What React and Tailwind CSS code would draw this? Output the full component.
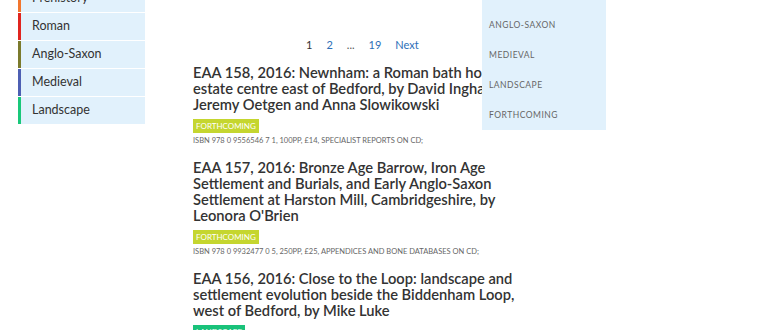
import React from "react";

const periods = [
  { name: "Prehistory", color: "border-[#f2762e]" },
  { name: "Roman", color: "border-[#e0251f]" },
  { name: "Anglo-Saxon", color: "border-[#7b7a2c]" },
  { name: "Medieval", color: "border-[#4d5fb3]" },
  { name: "Landscape", color: "border-[#19c87a]" },
];

const menu = ["Anglo-Saxon", "Medieval", "Landscape", "Forthcoming"];

const books = [
  {
    title:
      "EAA 158, 2016: Newnham: a Roman bath house and estate centre east of Bedford, by David Ingham, Jeremy Oetgen and Anna Slowikowski",
    tag: "Forthcoming",
    tagColor: "bg-[#c5d62f]",
    info: "ISBN 978 0 9556546 7 1, 100pp, £14, specialist reports on CD;",
  },
  {
    title:
      "EAA 157, 2016: Bronze Age Barrow, Iron Age Settlement and Burials, and Early Anglo-Saxon Settlement at Harston Mill, Cambridgeshire, by Leonora O'Brien",
    tag: "Forthcoming",
    tagColor: "bg-[#c5d62f]",
    info: "ISBN 978 0 9932477 0 5, 250pp, £25, appendices and bone databases on CD;",
  },
  {
    title:
      "EAA 156, 2016: Close to the Loop: landscape and settlement evolution beside the Biddenham Loop, west of Bedford, by Mike Luke",
    tag: "Landscape",
    tagColor: "bg-[#19c27a]",
    info: "ISBN 978 0 9556546 6 4, 200pp, £20;",
  },
];

export default function App() {
  return (
    <div className="relative w-[770px] h-[330px] overflow-hidden bg-white font-['Lato',sans-serif] text-[#333]">
      <div className="flex items-start">
        {/* Sidebar */}
        <div className="ml-[18px] w-[127px] -mt-[15px] flex flex-col gap-[1px]">
          {periods.map((p) => (
            <div
              key={p.name}
              className={`h-[27px] flex items-center pl-[11px] bg-[#e1f1fc] border-l-[3px] ${p.color} text-[12.5px]`}
            >
              {p.name}
            </div>
          ))}
        </div>

        {/* Main */}
        <div className="ml-[48px] w-[352px]">
          <div className="flex items-center gap-[14px] pl-[113px] pt-[37px] h-[52px] text-[11px] leading-[16px] text-[#2d6fb8]">
            <span className="text-[#333]">1</span>
            <span>2</span>
            <span className="text-[#555]">...</span>
            <span>19</span>
            <span>Next</span>
          </div>

          <div className="mt-[12px]">
            {books.map((b) => (
              <div key={b.title} className="mb-[13px]">
                <h3 className="text-[14.7px] leading-[16px] font-semibold">{b.title}</h3>
                <div
                  className={`w-fit mt-[7px] px-[3px] h-[14px] leading-[14px] text-[8px] uppercase text-white ${b.tagColor}`}
                >
                  {b.tag}
                </div>
                <p className="mt-[3px] text-[7.5px] leading-[10px] uppercase text-[#666]">{b.info}</p>
              </div>
            ))}
          </div>
        </div>
      </div>

      {/* Dropdown overlay */}
      <div className="absolute left-[482px] top-0 w-[124px] h-[130px] bg-[#e1f1fc] pt-[20px] pl-[7px]">
        {menu.map((m) => (
          <div key={m} className="h-[30px] text-[8.5px] tracking-[0.5px] uppercase text-[#666] leading-[10px]">
            {m}
          </div>
        ))}
      </div>
    </div>
  );
}
